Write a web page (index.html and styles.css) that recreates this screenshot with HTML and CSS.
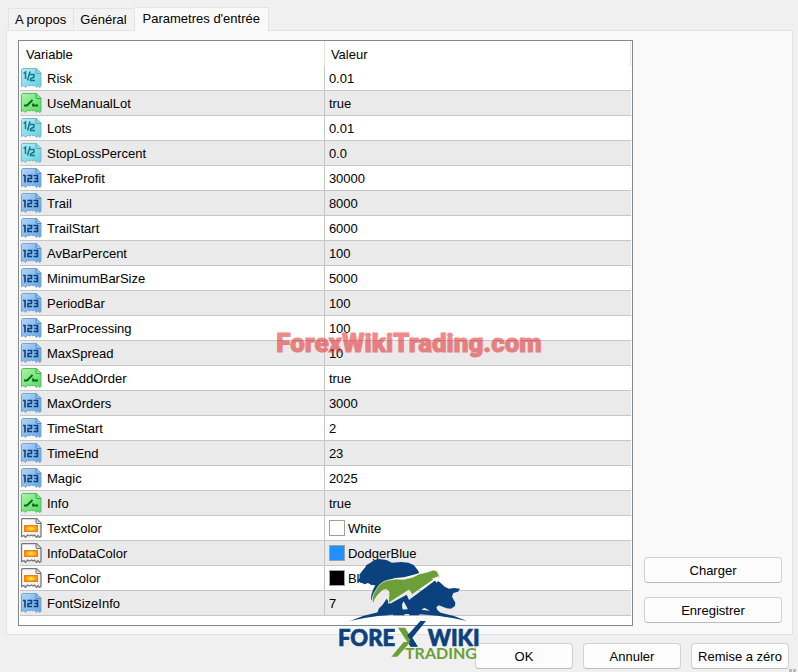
FILE: index.html
```html
<!DOCTYPE html>
<html lang="fr">
<head>
    <meta charset="UTF-8">
    <meta name="viewport" content="width=device-width, initial-scale=1.0">
    <title>Parametres d'entrée</title>
    <link rel="stylesheet" href="styles.css">
</head>
<body>
    <!-- icon shapes shared by the rows -->
    <svg class="defs" width="0" height="0" aria-hidden="true">
        <defs>
            <linearGradient id="gCyan" x1="0" y1="0" x2="1" y2="1">
                <stop offset="0" stop-color="#b5edf4"/><stop offset="1" stop-color="#62cfe0"/>
            </linearGradient>
            <linearGradient id="gGreen" x1="0" y1="0" x2="1" y2="1">
                <stop offset="0" stop-color="#a9f5a4"/><stop offset="1" stop-color="#4fdc62"/>
            </linearGradient>
            <linearGradient id="gBlue" x1="0" y1="0" x2="1" y2="1">
                <stop offset="0" stop-color="#b4d6f8"/><stop offset="1" stop-color="#5fa5e6"/>
            </linearGradient>
            <linearGradient id="gWhite" x1="0" y1="0" x2="1" y2="1">
                <stop offset="0" stop-color="#ffffff"/><stop offset="1" stop-color="#ededed"/>
            </linearGradient>
            <radialGradient id="gSwatch">
                <stop offset="0" stop-color="#fff34a"/><stop offset="1" stop-color="#ff8a00"/>
            </radialGradient>
            <path id="sheet" d="M1.5 .5H15.5L20 5V18.5L18.5 19.5L17 17.5L15.5 19.5L13.5 17L12 18L10.5 17L8.5 18L6.5 17L4.5 19.5L3 17.5L.5 18.5V1.5Z"/>
            <path id="fold" d="M15 .5V4.5Q15 5.5 16 5.5H20"/>
            <symbol id="half" viewBox="0 0 21 20">
                <use href="#sheet" fill="url(#gCyan)" stroke="#7fb9c4"/>
                <use href="#fold" fill="#8fdbe6" stroke="#5aa9b8"/>
                <path d="M2.5 5.5L4.5 4V11M9 3.5L6.5 12.5M9 6.5H13V9L9.5 11V12.5H14" fill="none" stroke="#17798c" stroke-width="1.5"/>
            </symbol>
            <symbol id="bool" viewBox="0 0 21 20">
                <use href="#sheet" fill="url(#gGreen)" stroke="#62b768"/>
                <use href="#fold" fill="#86e98a" stroke="#3ea84a"/>
                <path d="M3 12.5H6L11.5 7M12 10.5V12.5H17" fill="none" stroke="#10611a" stroke-width="1.8"/>
            </symbol>
            <symbol id="int" viewBox="0 0 21 20">
                <use href="#sheet" fill="url(#gBlue)" stroke="#7aa3cd"/>
                <use href="#fold" fill="#8cbff0" stroke="#5288c0"/>
                <path d="M2 7.5H4V14.5M6.5 7.5H10.5V10.5H7V13.5H11M12.5 7.5H16.5V13.5H12.5M13.5 10.5H16.5" fill="none" stroke="#123e78" stroke-width="1.6"/>
            </symbol>
            <symbol id="color" viewBox="0 0 21 20">
                <use href="#sheet" fill="url(#gWhite)" stroke="#777" stroke-width="1.3"/>
                <use href="#fold" fill="#d5d5d5" stroke="#707070"/>
                <rect x="3.5" y="7.5" width="13" height="6" fill="url(#gSwatch)" stroke="#f47a20"/>
            </symbol>
        </defs>
    </svg>

    <div class="dialog">
        <div class="tabs" role="tablist">
            <button class="tab" role="tab" type="button">A propos</button>
            <button class="tab" role="tab" type="button">Général</button>
            <button class="tab active" role="tab" type="button" aria-selected="true">Parametres d'entrée</button>
        </div>

        <div class="panel">
            <div class="list">
                <table>
                    <thead>
                        <tr><th>Variable</th><th>Valeur</th></tr>
                    </thead>
                    <tbody>
                        <tr><td><div class="cell"><svg class="icon"><use href="#half"/></svg>Risk</div></td><td>0.01</td></tr>
                        <tr><td><div class="cell"><svg class="icon"><use href="#bool"/></svg>UseManualLot</div></td><td>true</td></tr>
                        <tr><td><div class="cell"><svg class="icon"><use href="#half"/></svg>Lots</div></td><td>0.01</td></tr>
                        <tr><td><div class="cell"><svg class="icon"><use href="#half"/></svg>StopLossPercent</div></td><td>0.0</td></tr>
                        <tr><td><div class="cell"><svg class="icon"><use href="#int"/></svg>TakeProfit</div></td><td>30000</td></tr>
                        <tr><td><div class="cell"><svg class="icon"><use href="#int"/></svg>Trail</div></td><td>8000</td></tr>
                        <tr><td><div class="cell"><svg class="icon"><use href="#int"/></svg>TrailStart</div></td><td>6000</td></tr>
                        <tr><td><div class="cell"><svg class="icon"><use href="#int"/></svg>AvBarPercent</div></td><td>100</td></tr>
                        <tr><td><div class="cell"><svg class="icon"><use href="#int"/></svg>MinimumBarSize</div></td><td>5000</td></tr>
                        <tr><td><div class="cell"><svg class="icon"><use href="#int"/></svg>PeriodBar</div></td><td>100</td></tr>
                        <tr><td><div class="cell"><svg class="icon"><use href="#int"/></svg>BarProcessing</div></td><td>100</td></tr>
                        <tr><td><div class="cell"><svg class="icon"><use href="#int"/></svg>MaxSpread</div></td><td>10</td></tr>
                        <tr><td><div class="cell"><svg class="icon"><use href="#bool"/></svg>UseAddOrder</div></td><td>true</td></tr>
                        <tr><td><div class="cell"><svg class="icon"><use href="#int"/></svg>MaxOrders</div></td><td>3000</td></tr>
                        <tr><td><div class="cell"><svg class="icon"><use href="#int"/></svg>TimeStart</div></td><td>2</td></tr>
                        <tr><td><div class="cell"><svg class="icon"><use href="#int"/></svg>TimeEnd</div></td><td>23</td></tr>
                        <tr><td><div class="cell"><svg class="icon"><use href="#int"/></svg>Magic</div></td><td>2025</td></tr>
                        <tr><td><div class="cell"><svg class="icon"><use href="#bool"/></svg>Info</div></td><td>true</td></tr>
                        <tr><td><div class="cell"><svg class="icon"><use href="#color"/></svg>TextColor</div></td><td><div class="pick"><span class="swatch white"></span>White</div></td></tr>
                        <tr><td><div class="cell"><svg class="icon"><use href="#color"/></svg>InfoDataColor</div></td><td><div class="pick"><span class="swatch dodger"></span>DodgerBlue</div></td></tr>
                        <tr><td><div class="cell"><svg class="icon"><use href="#color"/></svg>FonColor</div></td><td><div class="pick"><span class="swatch black"></span>Black</div></td></tr>
                        <tr><td><div class="cell"><svg class="icon"><use href="#int"/></svg>FontSizeInfo</div></td><td>7</td></tr>
                    </tbody>
                </table>
            </div>
            <div class="side">
                <button class="btn" type="button">Charger</button>
                <button class="btn" type="button">Enregistrer</button>
            </div>
        </div>

        <div class="actions">
            <button class="btn" type="button">OK</button>
            <button class="btn" type="button">Annuler</button>
            <button class="btn" type="button">Remise a zéro</button>
        </div>

        <div class="watermark">ForexWikiTrading.com</div>

        <svg class="logo" viewBox="42 24 417 306" role="img" aria-label="Forex Wiki Trading">
            <!-- bear and bull -->
            <path fill="#0b427d" d="M97 91L104 84L103 74L112 62L121 52L124 45L134 40L147 31L163 27L184 30L201 38L229 36L250 38L266 45L278 60L283 69L266 74L237 82L211 84L189 91L173 103L158 119L150 132L144 145L138 151L139 135L145 117L151 106L139 105L129 99L119 103L111 99L102 95Z"/>
            <path fill="#0b427d" transform="translate(87 18)" d="M68 178L74 158L86 146L98 128L108 143L158 116L165 132L245 72L257 78L272 92L285 98L300 96L318 98L312 107L298 111L294 122L304 140L303 150L291 158L278 157L266 152L254 148L247 154L250 162L266 176L236 176L224 162L212 156Q200 158 195 178H166L160 156L149 136Q141 146 146 160L152 178H118L112 164L102 178Z"/>
            <path fill="#6c9f38" stroke="#fff" stroke-width="2" d="M144 164Q137 139 153 120Q165 96 187 91L212 87L236 88L262 82L282 72L305 67L325 60L336 63L344 80L336 96L327 88L261 134L252 120L190 160L192 125Q181 111 165 128Q148 144 144 164Z"/>
            <path fill="#fff" d="M320 86L343 78L335 99L330 90Z"/>
            <path fill="#0b427d" d="M75 213Q155 178 250 178T426 213Q335 192 250 192T75 213Z"/>
            <!-- lettering with the drawn X between the two words -->
            <text class="logo-name" x="39" y="287">FORE</text>
            <path fill="#6c9f38" d="M219 233H240L277 290H256Z"/>
            <path fill="#0b427d" d="M286 213H303L257 269L246 257ZM262 263L279 290H257L250 277Z"/>
            <path fill="#6c9f38" d="M236 276H256L217 320H199Z"/>
            <text class="logo-name" x="308" y="287">WIKI</text>
            <text class="logo-sub" x="240" y="326">TRADING</text>
        </svg>

        <svg class="grip" width="9" height="3" aria-hidden="true"><path fill="#b8b8b8" d="M0 0H3V3H0ZM4 0H7V3H4Z"/></svg>
    </div>
</body>
</html>
```
FILE: styles.css
```css
* {
    box-sizing: border-box;
}
body {
    margin: 0;
    background: #f0f0f0;
    color: #000;
    font-family: "Liberation Sans", Arial, sans-serif;
    font-size: 13px;
}
.defs {
    position: absolute;
}
.dialog {
    position: relative;
    min-height: 100vh;
    padding: 7px 5px 3px 6px;
}

/* tabs */
.tabs {
    display: flex;
    align-items: flex-end;
    padding-left: 2px;
}
.tab {
    height: 22px;
    padding: 0 7px 0 6px;
    border: 1px solid #e3e3e3;
    border-bottom: 0;
    border-right: 0;
    background: #f2f2f2;
    color: inherit;
    font: inherit;
}
.tab.active {
    height: 24px;
    margin-bottom: -1px;
    padding: 0 8px 2px;
    border-right: 1px solid #e3e3e3;
    background: #f9f9f9;
    z-index: 1;
}

/* main panel */
.panel {
    display: flex;
    gap: 11px;
    padding: 9px 10px 8px 11px;
    border: 1px solid #e3e3e3;
    background: #f9f9f9;
}
.list {
    flex: 1;
    padding: 0 1px 9px;
    border: 1px solid #828790;
    background: #fff;
}
table {
    width: 100%;
    table-layout: fixed;
    border-collapse: separate;
    border-spacing: 0;
}
th, td {
    height: 25px;
    padding: 1px 4px 0;
    text-align: left;
    font-weight: normal;
    line-height: 23px;
}
th {
    padding: 2px 6px 0;
    border-right: 1px solid #e3e3e3;
}
th:first-child {
    width: 49.9%;
}
td {
    border-bottom: 1px solid #c6c6c6;
}
td:first-child {
    padding: 1px 1px 0;
    border-right: 1px solid #c6c6c6;
}
tbody tr:nth-child(even) {
    background: #eaeaea;
}
.cell {
    display: flex;
    align-items: center;
    gap: 5px;
}
.icon {
    width: 21px;
    height: 20px;
    margin-bottom: 2px;
}
.pick {
    display: flex;
    align-items: center;
    gap: 3px;
}
.swatch {
    width: 16px;
    height: 16px;
    margin-bottom: 1px;
    border: 1px solid #a0a0a0;
}
.white { background: #fff; }
.dodger { background: #1e90ff; }
.black { background: #000; }

/* buttons */
.side {
    display: flex;
    flex-direction: column;
    justify-content: flex-end;
    gap: 14px;
    width: 138px;
    padding-bottom: 3px;
}
.btn {
    height: 26px;
    padding: 0;
    border: 1px solid #d0d0d0;
    border-bottom-color: #bcbcbc;
    border-radius: 4px;
    background: #fdfdfd;
    color: inherit;
    font: inherit;
}
.actions {
    display: flex;
    justify-content: flex-end;
    gap: 10px;
    padding: 8px 4px 0 0;
}
.actions .btn {
    width: 98px;
}

/* marks lying over the dialog */
.watermark {
    position: absolute;
    top: 323px;
    left: 0;
    right: 0;
    padding-left: 20px;
    text-align: center;
    font-family: Impact, Roboto, "Liberation Sans", sans-serif;
    font-size: 26px;
    font-weight: 900;
    line-height: 40px;
    color: #e32b2b;
    -webkit-text-stroke: 1px #e32b2b;
    opacity: 0.55;
    pointer-events: none;
}
.logo {
    position: absolute;
    left: 339px;
    top: 558px;
    width: 139px;
    height: 102px;
    overflow: visible;
    pointer-events: none;
}
.logo-name {
    font-family: Lato, sans-serif;
    font-size: 66px;
    font-weight: 900;
    fill: #0b427d;
    stroke: #0b427d;
    stroke-width: 2px;
}
.logo-sub {
    font-family: Lato, sans-serif;
    font-size: 48px;
    font-weight: 700;
    fill: #6c9f38;
}
.grip {
    position: absolute;
    right: 0;
    bottom: 0;
}
```
